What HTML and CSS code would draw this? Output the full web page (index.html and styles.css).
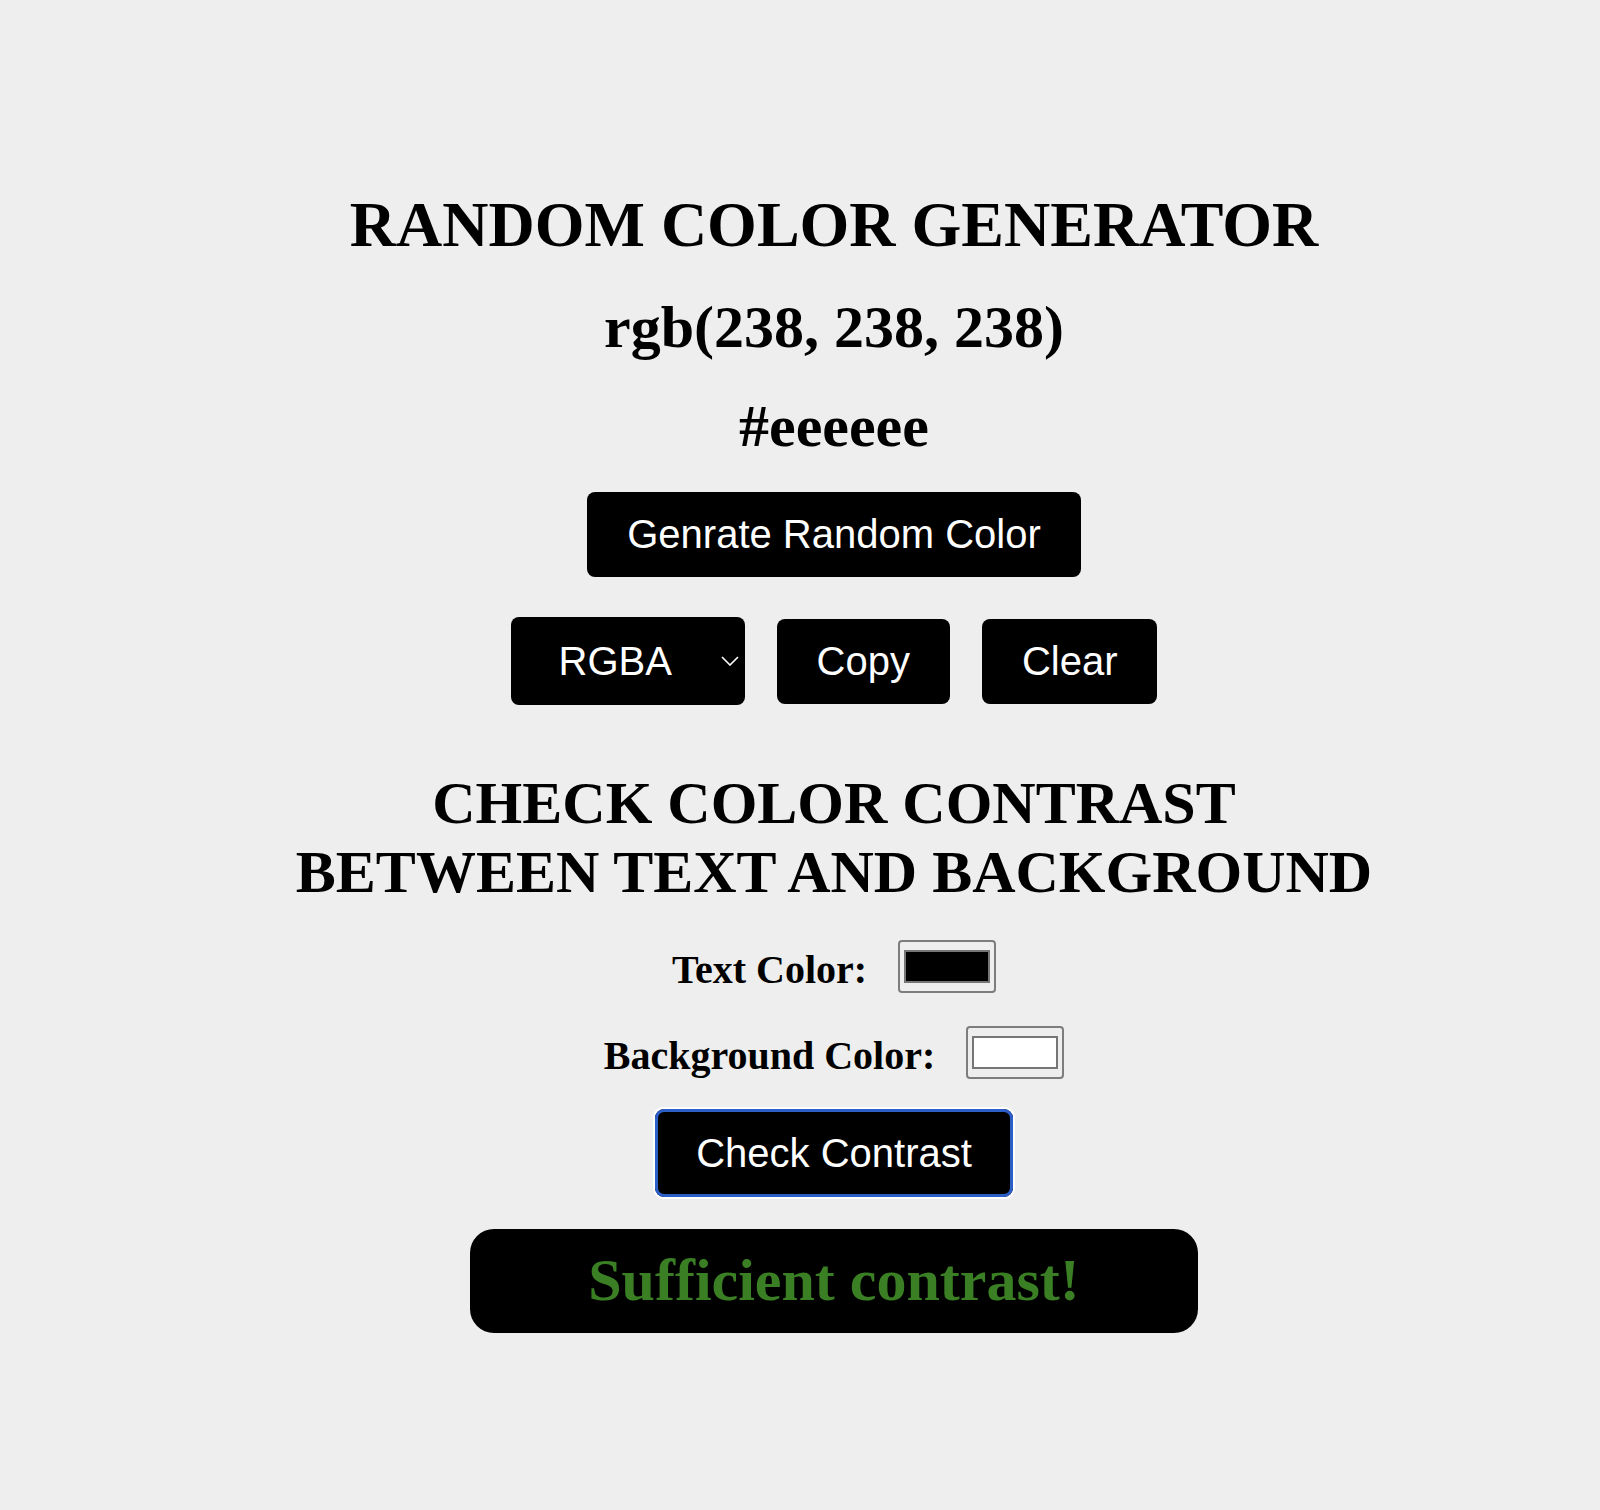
FILE: index.html
```html
<!DOCTYPE html>
<html lang="en">
<head>
<meta charset="utf-8">
<title>Random Color Generator</title>
<link rel="stylesheet" href="styles.css">
</head>
<body>
<main class="app">
  <h1 class="title">Random Color Generator</h1>
  <h2 class="code code-rgb">rgb(238, 238, 238)</h2>
  <h2 class="code code-hex">#eeeeee</h2>
  <button class="btn btn-generate" type="button">Genrate Random Color</button>
  <div class="actions">
    <span class="select-wrap">
      <select class="format-select">
        <option>RGBA</option>
        <option>HEX</option>
      </select>
      <svg class="chevron" width="18" height="10" viewBox="0 0 18 10"><polyline points="1,1 9,9 17,1" fill="none" stroke="#fff" stroke-width="1.6"/></svg>
    </span>
    <button class="btn" type="button">Copy</button>
    <button class="btn" type="button">Clear</button>
  </div>
  <h2 class="subtitle">Check color contrast between text and background</h2>
  <div class="field field-text">
    <label class="field-label" for="tc">Text Color:</label>
    <input class="color-input" id="tc" type="color" value="#000000">
  </div>
  <div class="field field-bg">
    <label class="field-label" for="bc">Background Color:</label>
    <input class="color-input" id="bc" type="color" value="#ffffff">
  </div>
  <button class="btn btn-check" type="button">Check Contrast</button>
  <div class="result">Sufficient contrast!</div>
</main>
</body>
</html>
```
FILE: styles.css
```css
html, body {
  margin: 0;
  padding: 0;
}
body {
  background: #eeeeee;
  font-family: "Liberation Serif", "Times New Roman", serif;
  color: #000;
}
.app {
  display: flex;
  flex-direction: column;
  align-items: center;
  padding: 188px 0 100px 68px;
}
.title {
  margin: 0;
  font-size: 64px;
  font-weight: bold;
  line-height: normal;
  text-transform: uppercase;
}
.code {
  margin: 0;
  font-size: 60px;
  font-weight: bold;
  line-height: normal;
}
.code-rgb { margin-top: 31px; }
.code-hex { margin-top: 30px; }
.btn {
  font-family: "Liberation Sans", Arial, sans-serif;
  font-size: 40px;
  line-height: 45px;
  color: #fff;
  background: #000;
  border: none;
  border-radius: 8px;
  padding: 20px 40px;
  margin: 0;
  cursor: pointer;
}
.btn-generate { margin-top: 31px; }
.actions {
  margin-top: 40px;
  display: flex;
  align-items: center;
  gap: 32px;
}
.select-wrap {
  position: relative;
  display: block;
}
.format-select {
  -webkit-appearance: none;
  appearance: none;
  display: block;
  box-sizing: border-box;
  width: 234px;
  height: 88px;
  padding: 0 0 0 48px;
  margin: 0;
  border: none;
  border-radius: 8px;
  background: #000;
  color: #fff;
  font-family: "Liberation Sans", Arial, sans-serif;
  font-size: 40px;
}
.chevron {
  position: absolute;
  right: 6px;
  top: 39px;
  pointer-events: none;
}
.subtitle {
  margin: 64px 0 0;
  max-width: 1100px;
  font-size: 60px;
  font-weight: bold;
  line-height: normal;
  text-align: center;
  text-transform: uppercase;
}
.field {
  display: flex;
  align-items: flex-end;
  gap: 31px;
}
.field-text { margin-top: 33px; }
.field-bg { margin-top: 33px; }
.field-label {
  font-size: 40px;
  font-weight: bold;
  line-height: 46px;
}
.color-input {
  -webkit-appearance: none;
  appearance: none;
  box-sizing: border-box;
  width: 98px;
  height: 53px;
  padding: 8px 4px;
  margin: 0;
  border: 2px solid #7d7d7d;
  border-radius: 4px;
  background: #eeeeee;
  cursor: pointer;
}
.color-input::-webkit-color-swatch-wrapper {
  padding: 0;
}
.color-input::-webkit-color-swatch {
  border: 2px solid #767676;
  border-radius: 0;
}
.btn-check {
  margin-top: 30px;
  padding: 20px 41px;
  line-height: 48px;
  border-radius: 9px;
  box-shadow: inset 0 0 0 3px #2c5ec8, 0 0 0 2px #ffffff;
}
.result {
  margin-top: 32px;
  box-sizing: border-box;
  width: 728px;
  padding: 17px 0 18px;
  background: #000;
  border-radius: 24px;
  color: #3a7f24;
  font-size: 60px;
  font-weight: bold;
  line-height: normal;
  text-align: center;
}
```
